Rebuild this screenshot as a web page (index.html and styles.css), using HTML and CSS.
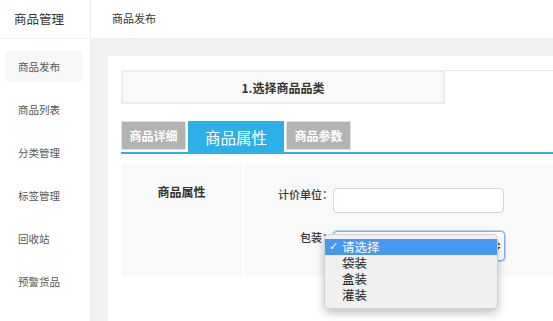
FILE: index.html
```html
<!DOCTYPE html>
<html lang="zh-CN">
<head>
    <meta charset="UTF-8">
    <title>商品发布</title>
    <link rel="stylesheet" href="styles.css">
</head>
<body>
    <!-- サイドバー -->
    <aside class="sidebar">
        <div class="side-title">商品管理</div>
        <ul class="side-menu">
            <li class="side-item active">商品发布</li>
            <li class="side-item">商品列表</li>
            <li class="side-item">分类管理</li>
            <li class="side-item">标签管理</li>
            <li class="side-item">回收站</li>
            <li class="side-item">预警货品</li>
        </ul>
    </aside>

    <main class="main">
        <div class="topbar">商品发布</div>

        <div class="content">
            <div class="panel">
                <!-- ステップ -->
                <div class="steps">
                    <div class="step">1.选择商品品类</div>
                    <div class="step-rest"></div>
                </div>

                <!-- タブ -->
                <div class="tabs">
                    <div class="tab">商品详细</div>
                    <div class="tab active">商品属性</div>
                    <div class="tab">商品参数</div>
                </div>

                <!-- 属性フォーム -->
                <div class="attr-row">
                    <div class="attr-name">商品属性</div>
                    <div class="attr-fields">
                        <div class="field">
                            <label class="field-label">计价单位：</label>
                            <div class="input"></div>
                        </div>
                        <div class="field">
                            <label class="field-label">包装：</label>
                            <div class="select-wrap">
                                <!-- 開いた状態のセレクト（値はメニューの下に隠れる） -->
                                <div class="select">
                                    <svg class="select-arrows" width="7" height="10" viewBox="0 0 7 10">
                                        <path d="M3.5 0.5 L6.5 4 L0.5 4 Z M3.5 9.5 L6.5 6 L0.5 6 Z" fill="#444"/>
                                    </svg>
                                </div>
                                <ul class="dropdown">
                                    <li class="option selected"><span class="check">✓</span>请选择</li>
                                    <li class="option">袋装</li>
                                    <li class="option">盒装</li>
                                    <li class="option">灌装</li>
                                </ul>
                            </div>
                        </div>
                    </div>
                </div>
            </div>
        </div>
    </main>
</body>
</html>
```

FILE: styles.css
```css
* {
    margin: 0;
    padding: 0;
    box-sizing: border-box;
}

body {
    font-family: "Noto Sans CJK SC", "Liberation Sans", sans-serif;
    color: #333;
    background: #fff;
    display: flex;
    height: 321px;
    overflow: hidden;
}

/* サイドバー */
.sidebar {
    width: 91px;
    flex-shrink: 0;
    border-right: 1px solid #eeeeee;
}

.side-title {
    height: 39px;
    line-height: 38px;
    border-bottom: 1px solid #f0f0f0;
    padding-left: 14px;
    font-size: 12.5px;
    color: #333;
}

.side-menu {
    list-style: none;
    padding: 12px 8px 0 5px;
}

.side-item {
    height: 31px;
    line-height: 31px;
    margin-bottom: 12px;
    padding-left: 13px;
    font-size: 10.5px;
    color: #555;
    border-radius: 3px;
}

.side-item.active {
    background: #f7f7f7;
}

/* メイン */
.main {
    flex: 1;
    display: flex;
    flex-direction: column;
    min-width: 0;
}

.topbar {
    height: 39px;
    line-height: 36px;
    border-bottom: 1px solid #f0f0f0;
    padding-left: 21px;
    font-size: 11px;
    color: #333;
}

.content {
    flex: 1;
    background: #f2f2f2;
    padding: 17px 0 0 17px;
}

.panel {
    height: 100%;
    background: #fff;
    padding: 14px 0 0 13px;
}

/* ステップ */
.steps {
    display: flex;
}

.step {
    width: 324px;
    height: 34px;
    line-height: 31px;
    text-align: center;
    background: #f9f9f9;
    border: 2px solid #ececec;
    font-size: 12px;
    font-weight: bold;
    color: #333;
}

.step-rest {
    flex: 1;
    border-top: 1px solid #e6e6e6;
}

/* タブ */
.tabs {
    display: flex;
    align-items: flex-start;
    gap: 2px;
    margin-top: 17px;
    border-bottom: 2px solid #2cb0e8;
}

.tab {
    width: 65px;
    height: 29px;
    line-height: 27px;
    margin-bottom: 2px;
    text-align: center;
    background: #b3b3b3;
    border: 1px solid #e2e2e2;
    color: #fff;
    font-size: 12px;
    font-weight: bold;
}

.tab.active {
    width: 96px;
    height: 31px;
    line-height: 30px;
    margin-bottom: 0;
    background: #2cb0e8;
    border-color: #2cb0e8;
    font-size: 15.5px;
    font-weight: normal;
}

/* 属性フォーム */
.attr-row {
    display: flex;
    gap: 2px;
    margin-top: 9px;
    height: 114px;
}

.attr-name {
    width: 121px;
    background: #f9f9f9;
    padding-top: 21px;
    text-align: center;
    font-size: 12px;
    font-weight: bold;
    line-height: 16px;
}

.attr-fields {
    flex: 1;
    background: #f9f9f9;
    padding-top: 25px;
    display: flex;
    flex-direction: column;
    gap: 18px;
}

.field {
    display: flex;
    align-items: flex-start;
}

.field-label {
    width: 89px;
    text-align: right;
    font-size: 11px;
    line-height: 12px;
    font-weight: 500;
    color: #333;
}

.input {
    width: 171px;
    height: 25px;
    background: #fff;
    border: 1px solid #d4d4d4;
    border-radius: 4px;
}

.select-wrap {
    position: relative;
}

.select {
    width: 172px;
    height: 30px;
    background: #fff;
    border: 1px solid #7fb2ee;
    border-radius: 4px;
    box-shadow: 0 0 0 1px #b9d5f7;
    display: flex;
    align-items: center;
    justify-content: flex-end;
    padding: 0 3px 0 8px;
}

.select-arrows {
    display: block;
}

/* ドロップダウン */
.dropdown {
    position: absolute;
    top: 3px;
    left: -9px;
    width: 174px;
    list-style: none;
    padding: 4px 0 5px;
    background: #f0f0f0;
    border: 1px solid #d2d2d2;
    border-radius: 5px;
    box-shadow: 0 4px 10px rgba(0, 0, 0, 0.25);
}

.option {
    height: 16px;
    line-height: 16px;
    padding-left: 17px;
    font-size: 12.5px;
    color: #222;
    position: relative;
}

.option.selected {
    background: #4798f5;
    color: #fff;
}

.check {
    position: absolute;
    left: 4px;
    top: 0;
    font-size: 11px;
    font-weight: bold;
    font-family: "DejaVu Sans", sans-serif;
}
```
